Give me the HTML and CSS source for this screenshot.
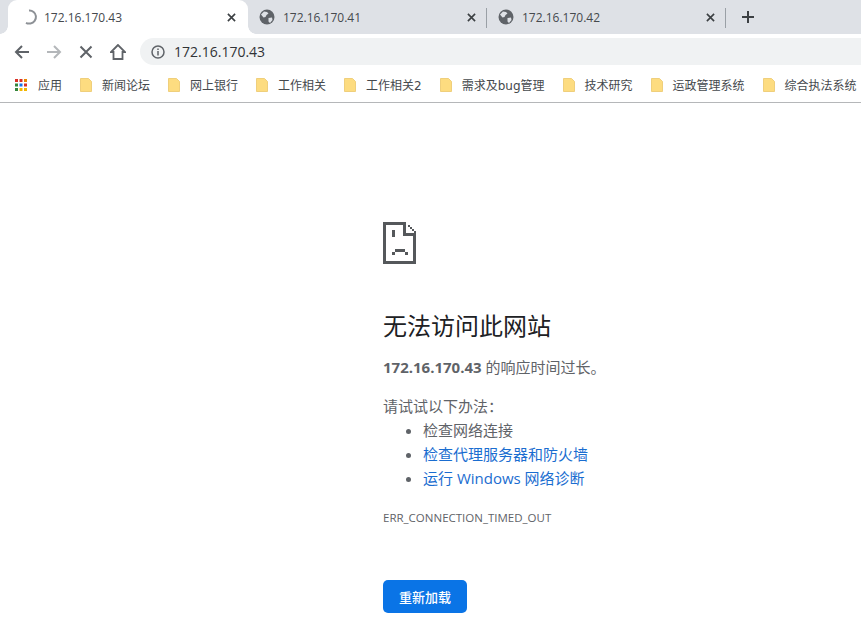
FILE: index.html
```html
<!DOCTYPE html>
<html lang="zh-CN">
<head>
    <meta charset="UTF-8">
    <meta name="viewport" content="width=device-width, initial-scale=1.0">
    <title>172.16.170.43</title>
    <link rel="stylesheet" href="styles.css">
</head>
<body>
    <div class="tab-strip">
        <div class="tab active">
            <svg class="tab-icon" viewBox="0 0 16 16"><path d="M7 1.500a6.500 6.500 0 0 1 1.500 12.900 6.500 6.500 0 0 1-4.500-.6" fill="none" stroke="#8d9196" stroke-width="2"/></svg>
            <span class="tab-title">172.16.170.43</span>
            <svg class="tab-close" viewBox="0 0 10 10"><path d="M1 1l8 8M9 1l-8 8" stroke="#3c4043" stroke-width="1.8"/></svg>
        </div>
        <div class="tab">
            <svg class="tab-icon" viewBox="0 0 16 16"><circle cx="8" cy="8" r="7.500" fill="#5f6368"/><path d="M2 5.500l3-3 3 .5 1.500 1.500-2 1.500-1 2-2 .5zM9.500 9l3.500-.5.500 2.500-2.500 3-1.500-1.500z" fill="#dee1e6"/></svg>
            <span class="tab-title">172.16.170.41</span>
            <svg class="tab-close" viewBox="0 0 10 10"><path d="M1 1l8 8M9 1l-8 8" stroke="#3c4043" stroke-width="1.8"/></svg>
        </div>
        <div class="tab">
            <svg class="tab-icon" viewBox="0 0 16 16"><circle cx="8" cy="8" r="7.500" fill="#5f6368"/><path d="M2 5.500l3-3 3 .5 1.500 1.500-2 1.500-1 2-2 .5zM9.500 9l3.500-.5.500 2.500-2.500 3-1.500-1.500z" fill="#dee1e6"/></svg>
            <span class="tab-title">172.16.170.42</span>
            <svg class="tab-close" viewBox="0 0 10 10"><path d="M1 1l8 8M9 1l-8 8" stroke="#3c4043" stroke-width="1.8"/></svg>
        </div>
        <svg class="new-tab" viewBox="0 0 12 12"><path d="M6 0v12M0 6h12" stroke="#3c4043" stroke-width="2"/></svg>
    </div>

    <div class="toolbar">
        <svg class="nav-icon" viewBox="0 0 16 16"><path d="M15 8H2M8 2L2 8l6 6" fill="none" stroke="#5f6368" stroke-width="2"/></svg>
        <svg class="nav-icon" viewBox="0 0 16 16"><path d="M1 8h13M8 2l6 6-6 6" fill="none" stroke="#b4b7ba" stroke-width="2"/></svg>
        <svg class="nav-icon" viewBox="0 0 16 16"><path d="M2.500 2.500l11 11M13.500 2.500l-11 11" fill="none" stroke="#5f6368" stroke-width="2"/></svg>
        <svg class="nav-icon" viewBox="0 0 16 16"><path d="M8 1L1 8h2.500v7h9V8H15z" fill="none" stroke="#5f6368" stroke-width="1.800"/></svg>
        <div class="omnibox">
            <svg class="info-icon" viewBox="0 0 14 14"><circle cx="7" cy="7" r="6" fill="none" stroke="#5f6368" stroke-width="1.500"/><path d="M7 6v4.500M7 3.500v1.500" stroke="#5f6368" stroke-width="1.500"/></svg>
            <span class="url">172.16.170.43</span>
        </div>
    </div>

    <div class="bookmarks">
        <div class="bookmark apps">
            <svg class="bookmark-icon" viewBox="0 0 12 12">
                <path d="M0 0h3v3H0z" fill="#d93025"/><path d="M4.500 0h3v3h-3z" fill="#d93025"/><path d="M9 0h3v3H9z" fill="#ea8600"/>
                <path d="M0 4.500h3v3H0z" fill="#34853c"/><path d="M4.500 4.500h3v3h-3z" fill="#1a73e8"/><path d="M9 4.500h3v3H9z" fill="#d93025"/>
                <path d="M0 9h3v3H0z" fill="#34853c"/><path d="M4.500 9h3v3h-3z" fill="#f2b600"/><path d="M9 9h3v3H9z" fill="#f2b600"/>
            </svg>
            <span>应用</span>
        </div>
        <div class="bookmark"><svg class="folder" viewBox="0 0 12 14"><path d="M.5.500h8l3 3v10H.5z" fill="#fddc80" stroke="#efcf7c"/></svg><span>新闻论坛</span></div>
        <div class="bookmark"><svg class="folder" viewBox="0 0 12 14"><path d="M.5.500h8l3 3v10H.5z" fill="#fddc80" stroke="#efcf7c"/></svg><span>网上银行</span></div>
        <div class="bookmark"><svg class="folder" viewBox="0 0 12 14"><path d="M.5.500h8l3 3v10H.5z" fill="#fddc80" stroke="#efcf7c"/></svg><span>工作相关</span></div>
        <div class="bookmark"><svg class="folder" viewBox="0 0 12 14"><path d="M.5.500h8l3 3v10H.5z" fill="#fddc80" stroke="#efcf7c"/></svg><span>工作相关2</span></div>
        <div class="bookmark"><svg class="folder" viewBox="0 0 12 14"><path d="M.5.500h8l3 3v10H.5z" fill="#fddc80" stroke="#efcf7c"/></svg><span>需求及bug管理</span></div>
        <div class="bookmark"><svg class="folder" viewBox="0 0 12 14"><path d="M.5.500h8l3 3v10H.5z" fill="#fddc80" stroke="#efcf7c"/></svg><span>技术研究</span></div>
        <div class="bookmark"><svg class="folder" viewBox="0 0 12 14"><path d="M.5.500h8l3 3v10H.5z" fill="#fddc80" stroke="#efcf7c"/></svg><span>运政管理系统</span></div>
        <div class="bookmark"><svg class="folder" viewBox="0 0 12 14"><path d="M.5.500h8l3 3v10H.5z" fill="#fddc80" stroke="#efcf7c"/></svg><span>综合执法系统</span></div>
    </div>

    <div class="error-page">
        <svg class="sad-icon" viewBox="0 0 33 42" shape-rendering="crispEdges">
            <path d="M0 0h23v3H3v36h27V14h3v28H0z" fill="#55585b"/>
            <path d="M20 0h3v11h10v3H20z" fill="#55585b"/>
            <path d="M25 3h2v2h2v2h2v2h2v2h-2V9h-2V7h-2V5h-2z" fill="#55585b"/>
            <path d="M9 8h3v7H9zM12 27h10v3H12zM9 30h3v3H9zM22 30h3v3h-3z" fill="#55585b"/>
        </svg>
        <h1>无法访问此网站</h1>
        <p class="summary"><strong>172.16.170.43</strong> 的响应时间过长。</p>
        <p class="try-label">请试试以下办法：</p>
        <ul class="suggestions">
            <li>检查网络连接</li>
            <li><a href="#">检查代理服务器和防火墙</a></li>
            <li><a href="#">运行 Windows 网络诊断</a></li>
        </ul>
        <div class="error-code">ERR_CONNECTION_TIMED_OUT</div>
        <button class="reload">重新加载</button>
    </div>
</body>
</html>
```

FILE: styles.css
```css
html, body {
    margin: 0;
    height: 100%;
    overflow: hidden;
}
body {
    font-family: "Open Sans", "Noto Sans CJK SC", sans-serif;
    background: white;
    color: #5f6368;
}
.tab-strip {
    display: flex;
    align-items: flex-end;
    height: 34px;
    padding-left: 8px;
    background: #dee1e6;
}
.tab {
    position: relative;
    display: flex;
    align-items: center;
    box-sizing: border-box;
    width: 239px;
    height: 34px;
    padding: 0 11px;
    font-size: 12px;
    color: #45494d;
}
.tab + .tab::after {
    content: "";
    position: absolute;
    right: 0;
    top: 8px;
    height: 20px;
    width: 1px;
    background: #9aa0a6;
}
.tab.active {
    width: 240px;
    padding: 0 12px 0 14px;
    background: white;
    border-radius: 9px 9px 0 0;
}
.tab.active .tab-icon {
    margin-right: 6px;
}
.tab.active::before,
.tab.active::after {
    content: "";
    position: absolute;
    bottom: 0;
    width: 8px;
    height: 8px;
    background: radial-gradient(circle at 0 0, #dee1e6 7.500px, white 8px);
}
.tab.active::before {
    left: -8px;
}
.tab.active::after {
    right: -8px;
    background: radial-gradient(circle at 100% 0, #dee1e6 7.500px, white 8px);
}
.tab-icon {
    width: 16px;
    height: 16px;
    margin-right: 8px;
    flex: none;
}
.tab-title {
    flex: 1;
}
.tab-close {
    width: 9px;
    height: 9px;
    flex: none;
}
.new-tab {
    width: 12px;
    height: 12px;
    margin: 0 0 11px 16px;
}
.toolbar {
    display: flex;
    align-items: center;
    box-sizing: border-box;
    height: 33px;
    padding: 2px 0 0 14px;
    background: white;
}
.nav-icon {
    width: 16px;
    height: 16px;
    margin-right: 16px;
    flex: none;
}
.omnibox {
    display: flex;
    align-items: center;
    flex: 1;
    height: 27px;
    margin-left: -2px;
    padding-left: 11px;
    background: #f0f2f3;
    border-radius: 14px 0 0 14px;
    font-size: 14px;
    color: #303336;
}
.info-icon {
    width: 14px;
    height: 14px;
    margin-right: 9px;
}
.bookmarks {
    display: flex;
    align-items: center;
    height: 35px;
    padding-left: 15px;
    border-bottom: 1px solid #b5b7b9;
    font-family: "DejaVu Sans", "Noto Sans CJK SC", sans-serif;
    font-size: 12px;
    color: #45494d;
    white-space: nowrap;
}
.bookmark {
    display: flex;
    align-items: center;
    margin-right: 18px;
}
.bookmark-icon {
    width: 12px;
    height: 12px;
    margin-right: 11px;
}
.folder {
    width: 12px;
    height: 14px;
    margin-right: 10px;
}
.error-page {
    margin-left: 383px;
    padding-top: 119px;
    font-size: 15px;
}
.sad-icon {
    display: block;
    width: 33px;
    height: 42px;
}
h1 {
    margin: 45px 0 0;
    font-size: 24px;
    font-weight: 400;
    line-height: 34px;
    color: #202124;
}
.summary {
    margin: 12px 0 0;
    line-height: 24px;
}
.try-label {
    margin: 15px 0 0;
    line-height: 24px;
}
.suggestions {
    margin: 0;
    padding-left: 40px;
    line-height: 24px;
}
.suggestions a {
    color: #1a6dd0;
    text-decoration: none;
}
.error-code {
    margin-top: 16px;
    font-size: 11.500px;
    line-height: 24px;
}
.reload {
    display: block;
    width: 84px;
    height: 33px;
    margin-top: 50px;
    padding: 0;
    border: none;
    border-radius: 5px;
    background: #0a74e6;
    color: white;
    font-family: inherit;
    font-size: 13px;
    font-weight: 500;
}
```
